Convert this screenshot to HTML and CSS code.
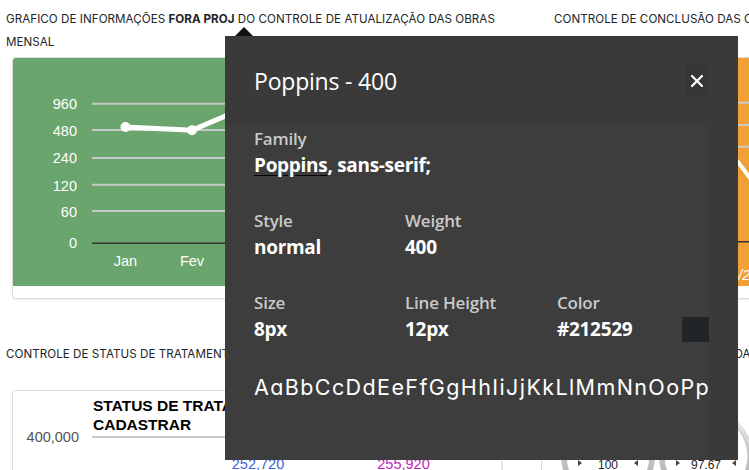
FILE: index.html
```html
<!DOCTYPE html>
<html lang="pt-BR">
<head>
<meta charset="utf-8">
<title>Dashboard</title>
<link rel="stylesheet" href="styles.css">
</head>
<body>
<main class="dash">
  <section class="row row-top">
    <div class="col">
      <h2 class="sec-title sec-title-top">GRAFICO DE INFORMAÇÕES <b>FORA PROJ</b> DO CONTROLE DE ATUALIZAÇÃO DAS OBRAS<br>MENSAL</h2>
      <div class="card">
        <div class="chart chart-green">
          <svg class="chart-svg" viewBox="0 0 528 228" width="528" height="228">
            <g class="grid">
              <line x1="79" y1="45.7" x2="528" y2="45.7"/>
              <line x1="79" y1="72" x2="528" y2="72"/>
              <line x1="79" y1="100" x2="528" y2="100"/>
              <line x1="79" y1="126.7" x2="528" y2="126.7"/>
              <line x1="79" y1="153" x2="528" y2="153"/>
            </g>
            <line class="zero" x1="79" y1="185.3" x2="528" y2="185.3"/>
            <g class="ylab">
              <text x="64" y="50.7">960</text>
              <text x="64" y="78">480</text>
              <text x="64" y="104.9">240</text>
              <text x="64" y="132.5">120</text>
              <text x="64" y="159.2">60</text>
              <text x="64" y="189.9">0</text>
            </g>
            <g class="xlab">
              <text x="112.5" y="208.2">Jan</text>
              <text x="179" y="208.2">Fev</text>
              <text x="245.5" y="208.2">Mar</text>
            </g>
            <polyline class="series" points="112.5,69 179,72.3 245.5,44"/>
            <circle class="dot" cx="112.5" cy="69" r="5"/>
            <circle class="dot" cx="179" cy="72.3" r="5"/>
            <circle class="dot" cx="245.5" cy="44" r="5"/>
          </svg>
        </div>
      </div>
    </div>
    <div class="col">
      <h2 class="sec-title sec-title-top">CONTROLE DE CONCLUSÃO DAS OBRAS<br>ACUMULADO</h2>
      <div class="card">
        <div class="chart chart-orange">
          <svg class="chart-svg" viewBox="0 0 528 228" width="528" height="228">
            <g class="grid">
              <line x1="40" y1="44.7" x2="528" y2="44.7"/>
              <line x1="40" y1="67" x2="528" y2="67"/>
              <line x1="40" y1="88.7" x2="528" y2="88.7"/>
            </g>
            <line class="zero" x1="40" y1="183.7" x2="528" y2="183.7"/>
            <polyline class="series thin" points="150,70 177,104 195,128"/>
            <text class="xlab-o" x="161" y="222">01/2024</text>
          </svg>
        </div>
      </div>
    </div>
  </section>

  <section class="row row-bottom">
    <div class="col">
      <h2 class="sec-title sec-title-sm">CONTROLE DE STATUS DE TRATAMENTO DAS OBRAS</h2>
      <div class="card card-plain">
        <svg class="status-svg" viewBox="0 0 528 90" width="528" height="90">
          <text class="st-title" x="80" y="19.5">STATUS DE TRATAMENTO A</text>
          <text class="st-title" x="80" y="38.5">CADASTRAR</text>
          <text class="st-axis" x="66" y="51.3">400,000</text>
          <line class="st-grid" x1="79" y1="46" x2="490" y2="46"/>
          <line class="st-vline" x1="489" y1="70" x2="489" y2="90"/>
          <text class="st-val st-blue" x="245" y="78.3">252,720</text>
          <text class="st-val st-mag" x="390.5" y="78.3">255,920</text>
        </svg>
      </div>
    </div>
    <div class="col">
      <h2 class="sec-title sec-title-sm">PERCENTUAIS DE CONCLUSÃO DAS OBRAS</h2>
      <div class="card card-plain card-gauges">
        <svg class="gauge-svg" viewBox="0 0 200 90" width="200" height="90">
          <defs>
            <linearGradient id="ring" x1="0" y1="0" x2="0" y2="1">
              <stop offset="0" stop-color="#f4f4f4"/>
              <stop offset="1" stop-color="#9a9a9a"/>
            </linearGradient>
          </defs>
          <g>
            <circle cx="48" cy="66" r="47" fill="url(#ring)"/>
            <circle cx="48" cy="66" r="42" fill="#ffffff" stroke="#bdbdbd" stroke-width="1"/>
            <path d="M18 70 l4 3 l-4 3z M78 70 l-4 3 l4 3z" fill="#444"/>
            <text class="g-val" x="48" y="79">100</text>
          </g>
          <g>
            <circle cx="146" cy="66" r="47" fill="url(#ring)"/>
            <circle cx="146" cy="66" r="42" fill="#ffffff" stroke="#bdbdbd" stroke-width="1"/>
            <path d="M116 70 l4 3 l-4 3z M176 70 l-4 3 l4 3z" fill="#444"/>
            <text class="g-val" x="146" y="79">97.67</text>
          </g>
        </svg>
      </div>
    </div>
  </section>
</main>

<div class="popover" role="dialog" aria-label="Poppins - 400">
  <span class="pop-arrow"></span>
  <header class="pop-head">
    <h3 class="pop-title">Poppins - 400</h3>
    <button class="pop-close" type="button" aria-label="Fechar">
      <svg viewBox="0 0 12 12" width="12" height="12"><path d="M1 1 L11 11 M11 1 L1 11" stroke="#fff" stroke-width="2.2" stroke-linecap="square"/></svg>
    </button>
  </header>
  <div class="pop-body">
    <div class="field">
      <div class="f-label">Family</div>
      <div class="f-value"><u class="fam">Poppins</u>, sans-serif;</div>
    </div>
    <div class="grid3">
      <div class="field">
        <div class="f-label">Style</div>
        <div class="f-value">normal</div>
      </div>
      <div class="field">
        <div class="f-label">Weight</div>
        <div class="f-value">400</div>
      </div>
    </div>
    <div class="grid3">
      <div class="field">
        <div class="f-label">Size</div>
        <div class="f-value">8px</div>
      </div>
      <div class="field">
        <div class="f-label">Line Height</div>
        <div class="f-value">12px</div>
      </div>
      <div class="field field-color">
        <div class="f-label">Color</div>
        <div class="color-row">
          <div class="f-value">#212529</div>
          <span class="swatch"></span>
        </div>
      </div>
    </div>
    <div class="sample">AaBbCcDdEeFfGgHhIiJjKkLlMmNnOoPpQqRrSsTtUuVvWwXxYyZz</div>
  </div>
</div>
</body>
</html>
```

FILE: styles.css
```css
html, body {
  margin: 0;
  padding: 0;
  overflow: hidden;
  background: #ffffff;
}

body {
  width: 749px;
  height: 470px;
  position: relative;
  font-family: "Inter", "Open Sans", sans-serif;
  color: #212529;
}

.dash {
  display: flex;
  flex-direction: column;
}

.row {
  display: grid;
  grid-template-columns: 548px 548px;
}

.row-top {
  padding-top: 8px;
}

.row-bottom {
  margin-top: 44px;
}

.col {
  padding: 0 6px;
}

.sec-title {
  margin: 0 0 3px;
  font-size: 11.6px;
  font-weight: 400;
  line-height: 23px;
  letter-spacing: 0.05px;
  white-space: nowrap;
}

.sec-title b {
  font-weight: 700;
}

.sec-title-top {
  height: 46px;
}

.sec-title-sm {
  margin-bottom: 24px;
}

.card {
  margin-left: 6px;
  width: 528px;
  background: #fff;
  border: 1px solid #dcdcdc;
  border-radius: 4px;
  box-shadow: 0 1px 2px rgba(0,0,0,0.08);
  padding-bottom: 12px;
  overflow: hidden;
}

.chart {
  height: 228px;
}

.chart-green { background: #6aa56d; }
.chart-orange { background: #f0a035; }

.chart-svg {
  display: block;
  font-family: "Liberation Sans", Arial, sans-serif;
}

.grid line {
  stroke: #c8c8c8;
  stroke-width: 2;
}

.zero {
  stroke: #333;
  stroke-width: 1.5;
}

.ylab text {
  fill: #ffffff;
  font-size: 14.5px;
  text-anchor: end;
}

.xlab text {
  fill: #ffffff;
  font-size: 14.5px;
  text-anchor: middle;
}

.xlab-o {
  fill: #ffffff;
  font-size: 14.5px;
  font-style: italic;
}

.series {
  fill: none;
  stroke: #ffffff;
  stroke-width: 5;
  stroke-linejoin: round;
}

.series.thin { stroke-width: 4; }

.dot { fill: #ffffff; }

.card-plain {
  padding-bottom: 0;
  height: 120px;
}

.status-svg, .gauge-svg {
  display: block;
  font-family: "Liberation Sans", Arial, sans-serif;
}

.st-title {
  font-size: 15.5px;
  font-weight: 700;
  fill: #000;
}

.st-axis {
  font-size: 14.5px;
  fill: #555;
  text-anchor: end;
}

.st-grid {
  stroke: #cccccc;
  stroke-width: 2;
}

.st-vline {
  stroke: #cccccc;
  stroke-width: 1;
}

.st-val {
  font-size: 14.5px;
  text-anchor: middle;
}

.st-blue { fill: #3d63dd; }
.st-mag { fill: #c21fc2; }

.card-gauges {
  border: none;
  box-shadow: none;
  background: transparent;
}

.g-val {
  font-size: 12px;
  fill: #222;
  text-anchor: middle;
}

/* Popover */
.popover {
  position: absolute;
  left: 225px;
  top: 36px;
  width: 513px;
  height: 424px;
  background: #3a3a3a;
  font-family: "Open Sans", "Noto Sans", sans-serif;
  color: #fff;
  display: flex;
  flex-direction: column;
}

.pop-arrow {
  position: absolute;
  left: 10px;
  top: -9px;
  width: 0;
  height: 0;
  border-left: 9px solid transparent;
  border-right: 9px solid transparent;
  border-bottom: 9px solid #111;
}

.pop-head {
  height: 89px;
  flex: none;
  display: flex;
  align-items: center;
  justify-content: space-between;
  padding: 0 30px 0 29px;
}

.pop-title {
  margin: 0;
  font-size: 23px;
  font-weight: 400;
  line-height: 30px;
  letter-spacing: -0.2px;
}

.pop-close {
  width: 22px;
  height: 33px;
  padding: 0;
  border: 0;
  background: #363636;
  display: flex;
  align-items: center;
  justify-content: center;
  cursor: pointer;
}

.pop-close svg { display: block; }

.pop-body {
  flex: 1;
  margin-right: 29px;
  background: #3d3d3d;
  padding: 3px 0 0 29px;
  display: flex;
  flex-direction: column;
  gap: 32px;
  overflow: hidden;
}

.f-label {
  font-size: 17px;
  line-height: 22px;
  font-weight: 600;
  color: #c9c9c9;
  letter-spacing: -0.2px;
}

.f-value {
  margin-top: 2px;
  font-size: 19px;
  line-height: 26px;
  font-weight: 700;
  color: #ffffff;
  letter-spacing: -0.3px;
}

.fam {
  text-decoration: underline;
  text-decoration-color: #000;
  text-underline-offset: 3px;
}

.grid3 {
  display: grid;
  grid-template-columns: 151px 152px 1fr;
}

.color-row {
  display: flex;
  align-items: center;
  justify-content: space-between;
}

.swatch {
  width: 27px;
  height: 25px;
  margin-top: 2px;
  background: #212529;
}

.sample {
  margin-top: -2px;
  font-family: "Inter", sans-serif;
  font-feature-settings: "cv11" 1;
  font-size: 21.5px;
  line-height: 30px;
  letter-spacing: 1.4px;
  white-space: nowrap;
  overflow: hidden;
}
```
